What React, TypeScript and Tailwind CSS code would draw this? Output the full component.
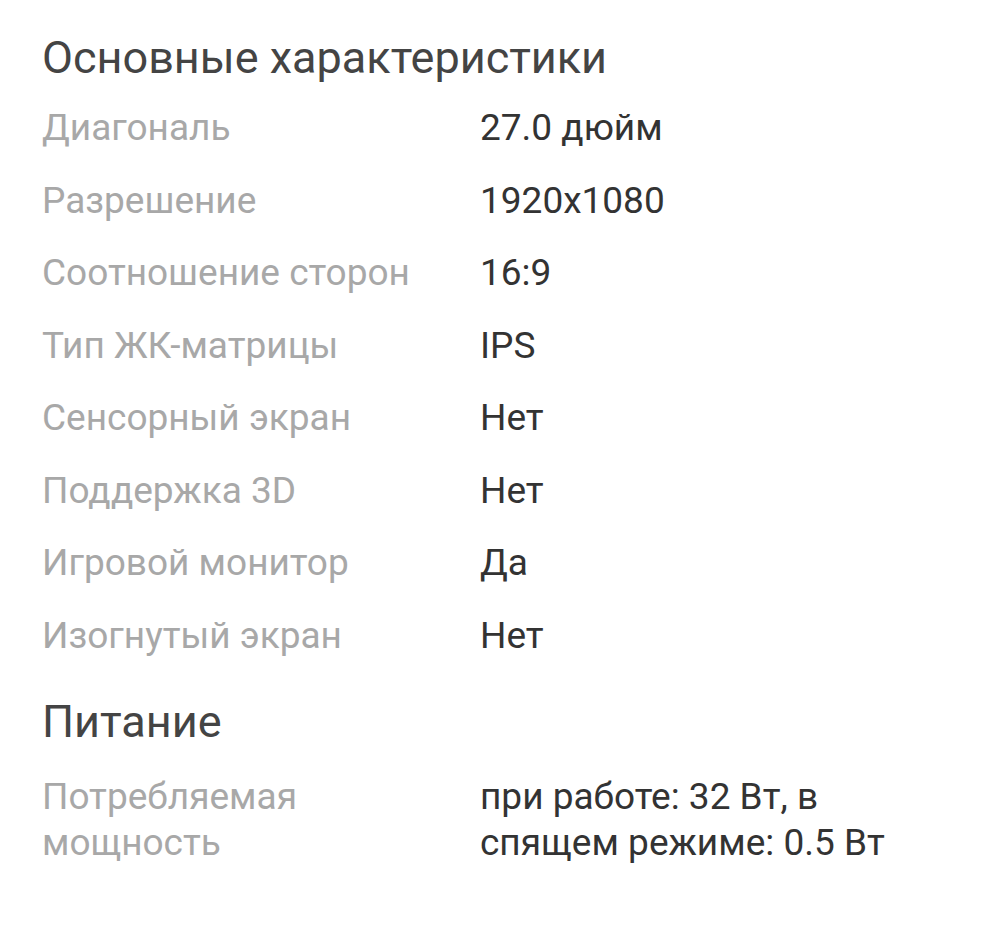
const specs = [
  ["Диагональ", "27.0 дюйм"],
  ["Разрешение", "1920x1080"],
  ["Соотношение сторон", "16:9"],
  ["Тип ЖК-матрицы", "IPS"],
  ["Сенсорный экран", "Нет"],
  ["Поддержка 3D", "Нет"],
  ["Игровой монитор", "Да"],
  ["Изогнутый экран", "Нет"],
];

const Row = ({ label, value }: { label: string; value: string }) => (
  <div className="grid grid-cols-[438px_1fr] text-[37px] leading-[46px]">
    <div className="text-[#a8a8a8] pr-6">{label}</div>
    <div className="text-[#333333]">{value}</div>
  </div>
);

export default function App() {
  return (
    <div
      className="min-h-[945px] w-[999px] bg-white px-[42px] pt-[32px]"
      style={{ fontFamily: "Roboto, 'Noto Sans', sans-serif" }}
    >
      <h2 className="text-[45px] leading-[52px] text-[#444444]">Основные характеристики</h2>
      <div className="mt-[21px] flex flex-col gap-[26.5px]">
        {specs.map(([l, v]) => (
          <Row key={l} label={l} value={v} />
        ))}
      </div>
      <h2 className="mt-[37px] text-[45px] leading-[52px] text-[#444444]">Питание</h2>
      <div className="mt-[26px]">
        <Row label="Потребляемая мощность" value="при работе: 32 Вт, в спящем режиме: 0.5 Вт" />
      </div>
    </div>
  );
}
